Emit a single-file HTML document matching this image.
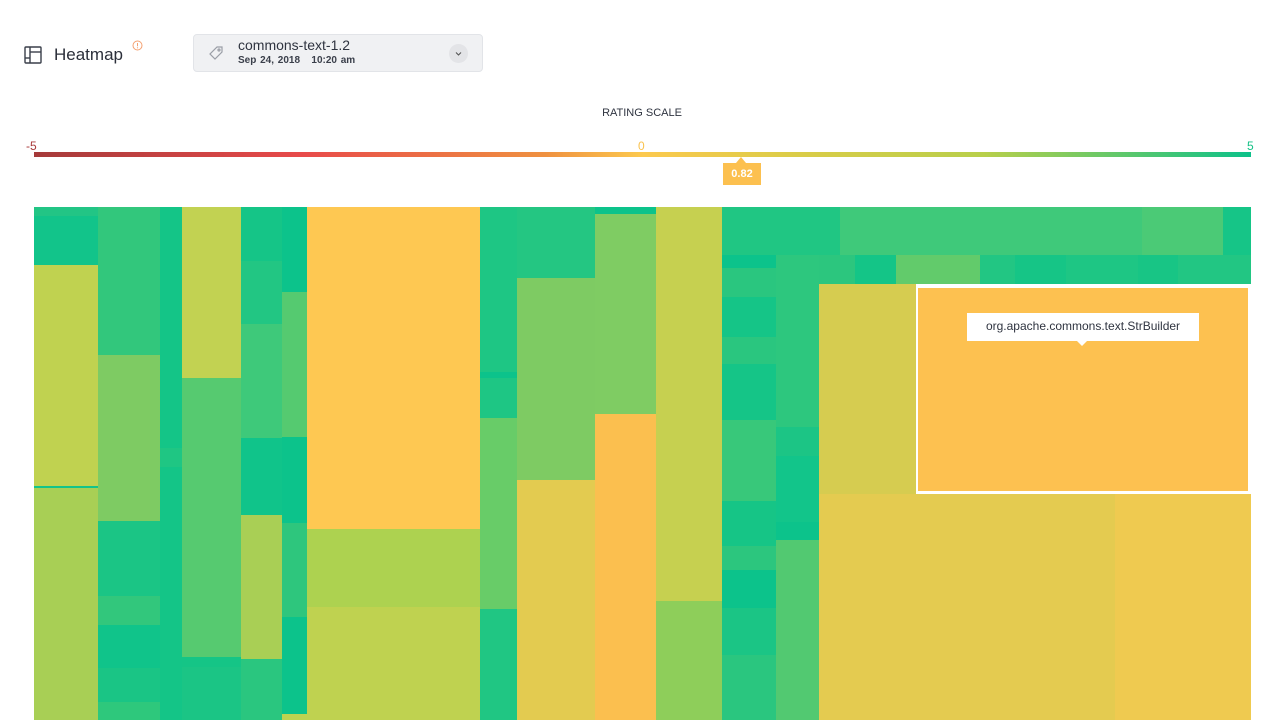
<!DOCTYPE html>
<html><head><meta charset="utf-8"><style>
*{margin:0;padding:0;box-sizing:border-box}
body{width:1280px;height:720px;overflow:hidden;background:#fff;font-family:"Liberation Sans",sans-serif;position:relative}
.a{position:absolute}
#tm div{position:absolute}
</style></head><body>
<svg class="a" style="left:24px;top:46px" width="18" height="18" viewBox="0 0 18 18" fill="none" stroke="#3a3f4a" stroke-width="1.4"><rect x="1" y="1" width="16" height="16" rx="1"/><line x1="6" y1="1" x2="6" y2="17"/><line x1="6" y1="6" x2="17" y2="6"/><line x1="1" y1="12" x2="6" y2="12"/></svg>
<div class="a" style="left:54px;top:45px;font-size:17px;color:#2b2f3a">Heatmap</div>
<svg class="a" style="left:132px;top:40px" width="11" height="11" viewBox="0 0 11 11"><circle cx="5.5" cy="5.5" r="4.5" fill="none" stroke="#f4a070" stroke-width="1"/><line x1="5.5" y1="3" x2="5.5" y2="6.3" stroke="#f4a070" stroke-width="1"/><circle cx="5.5" cy="7.8" r=".6" fill="#f4a070"/></svg>
<div class="a" style="left:193px;top:34px;width:290px;height:38px;background:#f0f1f3;border:1px solid #e2e4e8;border-radius:4px"></div>
<svg class="a" style="left:208px;top:45px" width="16" height="16" viewBox="0 0 16 16" fill="none" stroke="#9a9ea6" stroke-width="1.2"><path d="M9 2h5v5l-7 7-5-5z"/><circle cx="11" cy="5" r="1"/></svg>
<div class="a" style="left:238px;top:37px;font-size:14px;color:#2f3440">commons-text-1.2</div>
<div class="a" style="left:238px;top:55px;font-size:10px;color:#3a3f4a;font-weight:bold;word-spacing:1px">Sep 24, 2018 &nbsp;&nbsp;10:20 am</div>
<div class="a" style="left:449px;top:44px;width:19px;height:19px;border-radius:50%;background:#e3e4e7"></div>
<svg class="a" style="left:454px;top:49px" width="9" height="9" viewBox="0 0 9 9"><path d="M2 3.5l2.5 2.5 2.5-2.5" fill="none" stroke="#555" stroke-width="1.1"/></svg>

<div class="a" style="left:542px;width:200px;top:107px;text-align:center;font-size:11px;color:#2f3440">RATING SCALE</div>
<div class="a" style="left:26px;top:139px;font-size:12px;color:#a83a3a">-5</div>
<div class="a" style="left:638px;top:139px;font-size:12px;color:#f9c24e">0</div>
<div class="a" style="left:1247px;top:139px;font-size:12px;color:#16c187">5</div>
<div class="a" style="left:34px;top:152px;width:1217px;height:5px;background:linear-gradient(90deg,#a53a3a 0%,#e84a4a 22%,#ef9140 42%,#fcc94e 50%,#dccc48 62%,#b8cf4a 78%,#0cc18a 100%)"></div>
<div class="a" style="left:736px;top:157px;width:0;height:0;border-left:5px solid transparent;border-right:5px solid transparent;border-bottom:6px solid #fcc04f"></div>
<div class="a" style="left:723px;top:163px;width:38px;height:22px;background:#fcc04f;color:#fff;font-size:11px;font-weight:bold;text-align:center;line-height:22px">0.82</div>

<div id="tm">
<div style="left:34px;top:207px;width:64px;height:9px;background:#22c585"></div>
<div style="left:34px;top:216px;width:64px;height:49px;background:#12c48a"></div>
<div style="left:34px;top:265px;width:64px;height:221px;background:#c0d250"></div>
<div style="left:34px;top:486px;width:64px;height:2px;background:#12c48a"></div>
<div style="left:34px;top:488px;width:64px;height:232px;background:#a8cf55"></div>
<div style="left:98px;top:207px;width:62px;height:148px;background:#32c77c"></div>
<div style="left:98px;top:355px;width:62px;height:166px;background:#7ecb63"></div>
<div style="left:98px;top:521px;width:62px;height:75px;background:#1bc585"></div>
<div style="left:98px;top:596px;width:62px;height:29px;background:#32c77c"></div>
<div style="left:98px;top:625px;width:62px;height:43px;background:#10c48a"></div>
<div style="left:98px;top:668px;width:62px;height:34px;background:#1ac585"></div>
<div style="left:98px;top:702px;width:62px;height:18px;background:#2ec87c"></div>
<div style="left:160px;top:207px;width:22px;height:513px;background:#14c587"></div>
<div style="left:160px;top:448px;width:22px;height:19px;background:#1fc683"></div>
<div style="left:182px;top:207px;width:59px;height:171px;background:#c2d252"></div>
<div style="left:182px;top:378px;width:59px;height:279px;background:#56ca70"></div>
<div style="left:182px;top:657px;width:59px;height:10px;background:#15c586"></div>
<div style="left:182px;top:667px;width:59px;height:53px;background:#1bc585"></div>
<div style="left:241px;top:207px;width:41px;height:54px;background:#15c587"></div>
<div style="left:241px;top:261px;width:41px;height:63px;background:#22c683"></div>
<div style="left:241px;top:324px;width:41px;height:114px;background:#3ec97a"></div>
<div style="left:241px;top:438px;width:41px;height:77px;background:#10c48a"></div>
<div style="left:241px;top:515px;width:41px;height:144px;background:#a9cf55"></div>
<div style="left:241px;top:659px;width:41px;height:61px;background:#2ac67f"></div>
<div style="left:282px;top:207px;width:25px;height:85px;background:#0cc38b"></div>
<div style="left:282px;top:292px;width:25px;height:145px;background:#55ca70"></div>
<div style="left:282px;top:437px;width:25px;height:86px;background:#0cc38b"></div>
<div style="left:282px;top:523px;width:25px;height:94px;background:#2ec67d"></div>
<div style="left:282px;top:617px;width:25px;height:97px;background:#0cc38b"></div>
<div style="left:282px;top:714px;width:25px;height:6px;background:#bdd350"></div>
<div style="left:307px;top:207px;width:173px;height:322px;background:#fec852"></div>
<div style="left:307px;top:529px;width:173px;height:78px;background:#add250"></div>
<div style="left:307px;top:607px;width:173px;height:113px;background:#bfd250"></div>
<div style="left:480px;top:207px;width:37px;height:211px;background:#1ec684"></div>
<div style="left:480px;top:372px;width:37px;height:6px;background:#0cc38b"></div>
<div style="left:480px;top:418px;width:37px;height:191px;background:#68cc68"></div>
<div style="left:480px;top:609px;width:37px;height:111px;background:#20c683"></div>
<div style="left:517px;top:207px;width:78px;height:71px;background:#24c682"></div>
<div style="left:517px;top:278px;width:78px;height:202px;background:#7ecb63"></div>
<div style="left:517px;top:480px;width:78px;height:240px;background:#e3cb50"></div>
<div style="left:595px;top:207px;width:61px;height:7px;background:#0cc38b"></div>
<div style="left:595px;top:214px;width:61px;height:200px;background:#7fcc63"></div>
<div style="left:595px;top:414px;width:61px;height:306px;background:#fbbf4f"></div>
<div style="left:656px;top:207px;width:66px;height:394px;background:#c6d050"></div>
<div style="left:656px;top:601px;width:66px;height:119px;background:#8ece5a"></div>
<div style="left:722px;top:207px;width:54px;height:48px;background:#20c683"></div>
<div style="left:722px;top:255px;width:54px;height:13px;background:#0cc38b"></div>
<div style="left:722px;top:268px;width:54px;height:29px;background:#2ac67f"></div>
<div style="left:722px;top:297px;width:54px;height:40px;background:#15c587"></div>
<div style="left:722px;top:337px;width:54px;height:27px;background:#2ac67f"></div>
<div style="left:722px;top:364px;width:54px;height:56px;background:#15c587"></div>
<div style="left:722px;top:420px;width:54px;height:81px;background:#38c87a"></div>
<div style="left:722px;top:501px;width:54px;height:45px;background:#16c586"></div>
<div style="left:722px;top:546px;width:54px;height:24px;background:#2cc67e"></div>
<div style="left:722px;top:570px;width:54px;height:38px;background:#0cc38b"></div>
<div style="left:722px;top:608px;width:54px;height:47px;background:#1bc585"></div>
<div style="left:722px;top:655px;width:54px;height:65px;background:#2ac67f"></div>
<div style="left:776px;top:207px;width:43px;height:48px;background:#20c683"></div>
<div style="left:776px;top:255px;width:43px;height:172px;background:#2dc77e"></div>
<div style="left:776px;top:427px;width:43px;height:29px;background:#1cc585"></div>
<div style="left:776px;top:456px;width:43px;height:66px;background:#12c58a"></div>
<div style="left:776px;top:522px;width:43px;height:18px;background:#0cc38b"></div>
<div style="left:776px;top:540px;width:43px;height:180px;background:#52c971"></div>
<div style="left:819px;top:207px;width:432px;height:48px;background:#3fc97a"></div>
<div style="left:819px;top:207px;width:21px;height:48px;background:#20c683"></div>
<div style="left:1142px;top:207px;width:81px;height:48px;background:#4bca76"></div>
<div style="left:1223px;top:207px;width:28px;height:48px;background:#16c587"></div>
<div style="left:819px;top:255px;width:36px;height:29px;background:#2cc67e"></div>
<div style="left:855px;top:255px;width:41px;height:29px;background:#14c587"></div>
<div style="left:896px;top:255px;width:84px;height:29px;background:#62cb6b"></div>
<div style="left:980px;top:255px;width:35px;height:29px;background:#22c683"></div>
<div style="left:1015px;top:255px;width:51px;height:29px;background:#16c586"></div>
<div style="left:1066px;top:255px;width:72px;height:29px;background:#1ec684"></div>
<div style="left:1138px;top:255px;width:40px;height:29px;background:#18c585"></div>
<div style="left:1178px;top:255px;width:73px;height:29px;background:#22c683"></div>
<div style="left:819px;top:284px;width:97px;height:210px;background:#d6cc50"></div>
<div style="left:916px;top:284px;width:335px;height:210px;background:#fff"></div>
<div style="left:918px;top:288px;width:330px;height:203px;background:#fdc150"></div>
<div style="left:819px;top:494px;width:296px;height:226px;background:#e4cb50"></div>
<div style="left:1115px;top:494px;width:136px;height:226px;background:#efca50"></div>
</div>
<div class="a" style="left:967px;top:313px;width:232px;height:28px;background:#fff;font-size:12px;color:#2f3440;text-align:center;line-height:27px">org.apache.commons.text.StrBuilder</div>
<div class="a" style="left:1077px;top:341px;width:0;height:0;border-left:5px solid transparent;border-right:5px solid transparent;border-top:5px solid #fff"></div>
</body></html>
